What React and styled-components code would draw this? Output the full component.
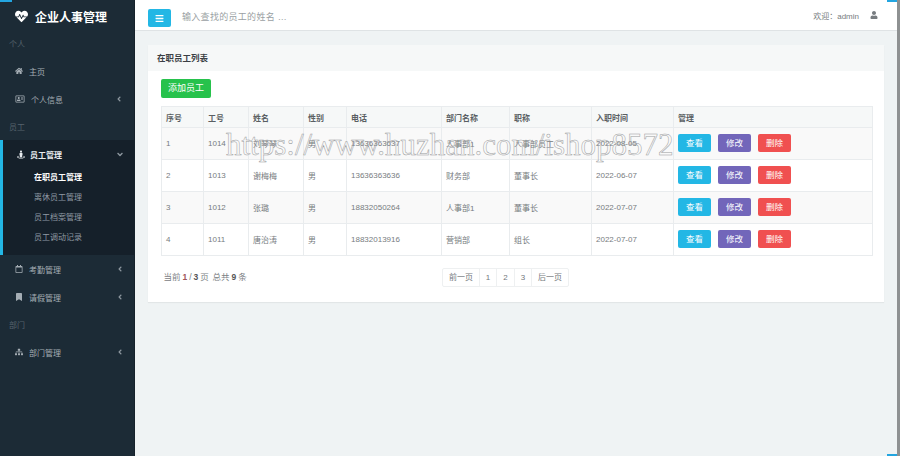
import React from "react";
import styled, { createGlobalStyle } from "styled-components";
import {
  FaHeartbeat,
  FaBars,
  FaHome,
  FaRegAddressCard,
  FaStreetView,
  FaRegCalendar,
  FaBookmark,
  FaSitemap,
  FaUser,
  FaAngleLeft,
  FaAngleDown,
} from "react-icons/fa";

const GlobalStyle = createGlobalStyle`
  html, body {
    margin: 0;
    padding: 0;
    height: 100%;
    overflow: hidden;
  }
  body {
    font-family: "Liberation Sans", "Noto Sans CJK SC", sans-serif;
    font-size: 8px;
    color: #676a6c;
  }
`;

const Page = styled.div`
  position: relative;
  display: flex;
  width: 900px;
  height: 456px;
  overflow: hidden;
  background: #eff3f4;
`;

const Sidebar = styled.aside`
  width: 135px;
  flex-shrink: 0;
  background: #1c2b36;
  color: #a4adb4;
  border-right: 1px solid #16222b;
  box-sizing: border-box;
`;

const Brand = styled.div`
  height: 33px;
  display: flex;
  align-items: center;
  gap: 7px;
  padding-left: 15px;
  color: #fff;
  font-size: 12px;
  font-weight: 700;
  svg {
    font-size: 13px;
  }
`;

const GroupLabel = styled.div`
  height: ${(p) => p.$h || 24}px;
  line-height: ${(p) => (p.$h ? 30 : 24)}px;
  padding-left: 9px;
  color: #56636d;
  font-size: 8px;
`;

const NavItem = styled.div`
  height: 28px;
  display: flex;
  align-items: center;
  gap: 6px;
  padding: 0 10px 0 15px;
  font-size: 8px;
  svg:first-child {
    font-size: 8px;
    width: ${(p) => p.$iconW || 8}px;
  }
`;

const Arrow = styled.span`
  margin-left: auto;
  display: flex;
  font-size: 8px;
  color: #8c969e;
`;

const ActiveGroup = styled.div`
  height: 115px;
  background: #15202a;
  border-left: 3px solid #23b7e5;
  color: #e8ecef;
`;

const SubItem = styled.div`
  height: 20px;
  line-height: 20px;
  padding-left: 31px;
  font-size: 8px;
  color: ${(p) => (p.$active ? "#ffffff" : "#8f9aa3")};
  font-weight: ${(p) => (p.$active ? 700 : 400)};
`;

const ActiveHead = styled(NavItem)`
  padding-left: 14px;
  gap: 5px;
  font-weight: 700;
  svg:first-child {
    font-size: 9px;
  }
`;

const Main = styled.main`
  flex: 1;
  min-width: 0;
  display: flex;
  flex-direction: column;
`;

const Header = styled.header`
  height: 31px;
  flex-shrink: 0;
  background: #fff;
  border-bottom: 1px solid #dfe3e5;
  box-sizing: border-box;
  display: flex;
  align-items: center;
  padding: 0 19px 0 13px;
`;

const MenuButton = styled.div`
  width: 23px;
  height: 18px;
  margin-top: 6px;
  background: #23b7e5;
  border-radius: 2px;
  color: #fff;
  display: flex;
  align-items: center;
  justify-content: center;
  font-size: 9px;
`;

const SearchHint = styled.div`
  margin: 2px 0 0 11px;
  color: #9a9fa3;
  font-size: 9px;
  letter-spacing: 0.3px;
`;

const Welcome = styled.div`
  margin-left: auto;
  display: flex;
  align-items: center;
  gap: 11px;
  color: #777c80;
  font-size: 8px;
  svg {
    font-size: 8px;
  }
`;

const Content = styled.div`
  padding: 14px 13px 0;
`;

const Panel = styled.section`
  background: #fff;
  box-shadow: 0 1px 1px rgba(0, 0, 0, 0.05);
`;

const PanelTitle = styled.div`
  height: 26px;
  line-height: 26px;
  padding-left: 9px;
  background: #f6f8f8;
  color: #3a3f44;
  font-size: 8.5px;
  font-weight: 700;
`;

const PanelBody = styled.div`
  height: 231px;
  box-sizing: border-box;
  padding: 8px 12px 0 13px;
`;

const AddButton = styled.div`
  width: 50px;
  height: 19px;
  line-height: 19px;
  text-align: center;
  background: #27c24c;
  border-radius: 2px;
  color: #fff;
  font-size: 9px;
`;

const Table = styled.table`
  width: 711px;
  margin-top: 8px;
  border-collapse: collapse;
  table-layout: fixed;
  font-size: 8px;
  color: #777c80;
  th,
  td {
    border: 1px solid #e9ecee;
    padding: 0 0 0 4px;
    text-align: left;
    box-sizing: border-box;
  }
  th {
    height: 21px;
    background: #f6f8f8;
    font-weight: 700;
    color: #5a5f63;
  }
  td {
    height: 32px;
  }
  tbody tr:nth-child(odd) {
    background: #f9f9f9;
  }
`;

const Actions = styled.div`
  display: flex;
  gap: 7px;
  margin-bottom: 2px;
`;

const ActionButton = styled.div`
  width: 33px;
  height: 18px;
  line-height: 18px;
  text-align: center;
  border-radius: 2px;
  color: #fff;
  font-size: 8.5px;
  background: ${(p) => p.$color};
`;

const Footer = styled.div`
  display: flex;
  align-items: center;
  margin-top: 12px;
  height: 19px;
`;

const Summary = styled.div`
  width: 281px;
  margin-bottom: 3px;
  padding-left: 2.5px;
  box-sizing: border-box;
  font-size: 8.5px;
  word-spacing: -0.4px;
  color: #7b8084;
  b {
    color: #555;
    font-weight: 700;
  }
  em {
    font-style: normal;
    font-weight: 700;
    color: #a0555c;
  }
`;

const Pager = styled.div`
  display: flex;
  height: 19px;
  border: 1px solid #eef0f1;
  border-radius: 2px;
  box-sizing: border-box;
`;

const PageLink = styled.div`
  width: ${(p) => p.$w}px;
  line-height: 17px;
  text-align: center;
  font-size: 8px;
  color: #73787c;
  border-right: 1px solid #eef0f1;
  box-sizing: border-box;
  &:last-child {
    border-right: 0;
  }
`;

const EdgeStrip = styled.div`
  width: 3px;
  flex-shrink: 0;
  background: #8e9192;
`;

const CornerMark = styled.div`
  position: absolute;
  height: 2px;
  background: #23a5e0;
  left: ${(p) => p.$left}px;
  width: ${(p) => p.$w}px;
  ${(p) => (p.$bottom ? "bottom: 0;" : "top: 0;")}
`;

const Watermark = styled.div`
  position: absolute;
  left: 226px;
  top: 126px;
  font-family: "Liberation Serif", serif;
  font-size: 31px;
  line-height: 37px;
  white-space: nowrap;
  color: transparent;
  -webkit-text-stroke: 0.5px #9a9c9e;
`;

const employees = [
  { id: 1, no: "1014", name: "刘琴琴", sex: "男", tel: "13636363637", dept: "人事部1", title: "人事部员工", date: "2022-08-05" },
  { id: 2, no: "1013", name: "谢梅梅", sex: "男", tel: "13636363636", dept: "财务部", title: "董事长", date: "2022-06-07" },
  { id: 3, no: "1012", name: "张璐", sex: "男", tel: "18832050264", dept: "人事部1", title: "董事长", date: "2022-07-07" },
  { id: 4, no: "1011", name: "唐治涛", sex: "男", tel: "18832013916", dept: "营销部", title: "组长", date: "2022-07-07" },
];

const columnWidths = [42, 45, 55, 43, 95, 68, 82, 82, 199];
const columnTitles = ["序号", "工号", "姓名", "性别", "电话", "部门名称", "职称", "入职时间", "管理"];

const App = () => {
  return (
    <Page>
      <GlobalStyle />
      <Sidebar>
        <Brand>
          <FaHeartbeat />
          企业人事管理
        </Brand>
        <GroupLabel>个人</GroupLabel>
        <NavItem>
          <FaHome />
          主页
        </NavItem>
        <NavItem $iconW={10}>
          <FaRegAddressCard />
          个人信息
          <Arrow><FaAngleLeft /></Arrow>
        </NavItem>
        <GroupLabel $h={27}>员工</GroupLabel>
        <ActiveGroup>
          <ActiveHead>
            <FaStreetView />
            员工管理
            <Arrow><FaAngleDown /></Arrow>
          </ActiveHead>
          <SubItem $active>在职员工管理</SubItem>
          <SubItem>离休员工管理</SubItem>
          <SubItem>员工档案管理</SubItem>
          <SubItem>员工调动记录</SubItem>
        </ActiveGroup>
        <NavItem>
          <FaRegCalendar />
          考勤管理
          <Arrow><FaAngleLeft /></Arrow>
        </NavItem>
        <NavItem>
          <FaBookmark />
          请假管理
          <Arrow><FaAngleLeft /></Arrow>
        </NavItem>
        <GroupLabel $h={27}>部门</GroupLabel>
        <NavItem>
          <FaSitemap />
          部门管理
          <Arrow><FaAngleLeft /></Arrow>
        </NavItem>
      </Sidebar>
      <Main>
        <Header>
          <MenuButton><FaBars /></MenuButton>
          <SearchHint>输入查找的员工的姓名 …</SearchHint>
          <Welcome>
            欢迎：admin
            <FaUser />
          </Welcome>
        </Header>
        <Content>
          <Panel>
            <PanelTitle>在职员工列表</PanelTitle>
            <PanelBody>
              <AddButton>添加员工</AddButton>
              <Table>
                <colgroup>
                  {columnWidths.map((w, i) => (
                    <col key={i} width={w} />
                  ))}
                </colgroup>
                <thead>
                  <tr>
                    {columnTitles.map((t) => (
                      <th key={t}>{t}</th>
                    ))}
                  </tr>
                </thead>
                <tbody>
                  {employees.map((e) => (
                    <tr key={e.id}>
                      <td>{e.id}</td>
                      <td>{e.no}</td>
                      <td>{e.name}</td>
                      <td>{e.sex}</td>
                      <td>{e.tel}</td>
                      <td>{e.dept}</td>
                      <td>{e.title}</td>
                      <td>{e.date}</td>
                      <td>
                        <Actions>
                          <ActionButton $color="#23b7e5">查看</ActionButton>
                          <ActionButton $color="#7266ba">修改</ActionButton>
                          <ActionButton $color="#f05050">删除</ActionButton>
                        </Actions>
                      </td>
                    </tr>
                  ))}
                </tbody>
              </Table>
              <Footer>
                <Summary>
                  当前 <em>1</em> / <b>3</b> 页 &nbsp;总共 <b>9</b> 条
                </Summary>
                <Pager>
                  <PageLink $w={37}>前一页</PageLink>
                  <PageLink $w={17}>1</PageLink>
                  <PageLink $w={18}>2</PageLink>
                  <PageLink $w={17}>3</PageLink>
                  <PageLink $w={36}>后一页</PageLink>
                </Pager>
              </Footer>
            </PanelBody>
          </Panel>
        </Content>
      </Main>
      <EdgeStrip />
      <CornerMark $left={0} $w={12} />
      <CornerMark $left={887} $w={10} />
      <CornerMark $left={887} $w={10} $bottom />
      <Watermark>https://www.huzhan.com/ishop8572</Watermark>
    </Page>
  );
};

export default App;
